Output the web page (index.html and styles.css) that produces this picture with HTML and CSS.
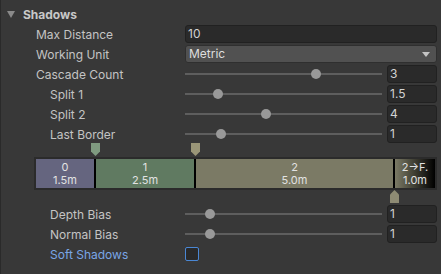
FILE: index.html
```html
<!DOCTYPE html>
<html lang="en">
<head>
    <meta charset="UTF-8">
    <title>Shadows</title>
    <link rel="stylesheet" href="styles.css">
</head>
<body>
<div class="panel">
    <div class="foldout">
        <span class="arrow"></span>
        <span class="foldout-title">Shadows</span>
    </div>

    <div class="row">
        <div class="label">Max Distance</div>
        <div class="control"><div class="field wide">10</div></div>
    </div>
    <div class="row">
        <div class="label">Working Unit</div>
        <div class="control">
            <div class="dropdown">Metric<span class="caret"></span></div>
        </div>
    </div>
    <div class="row">
        <div class="label">Cascade Count</div>
        <div class="control">
            <div class="slider"><div class="track"></div><div class="knob" style="left: 66.5%"></div></div>
            <div class="field num">3</div>
        </div>
    </div>
    <div class="row">
        <div class="label sub">Split 1</div>
        <div class="control">
            <div class="slider"><div class="track"></div><div class="knob" style="left: 17%"></div></div>
            <div class="field num">1.5</div>
        </div>
    </div>
    <div class="row">
        <div class="label sub">Split 2</div>
        <div class="control">
            <div class="slider"><div class="track"></div><div class="knob" style="left: 41%"></div></div>
            <div class="field num">4</div>
        </div>
    </div>
    <div class="row">
        <div class="label sub">Last Border</div>
        <div class="control">
            <div class="slider"><div class="track"></div><div class="knob" style="left: 18.5%"></div></div>
            <div class="field num">1</div>
        </div>
    </div>

    <!-- cascade splits -->
    <div class="cascades">
        <div class="pins">
            <span class="pin down green" style="left: 61px"></span>
            <span class="pin down olive" style="left: 161px"></span>
        </div>
        <div class="bar">
            <div class="seg seg0"><span>0</span><span>1.5m</span></div>
            <div class="seg seg1"><span>1</span><span>2.5m</span></div>
            <div class="seg seg2"><span>2</span><span>5.0m</span></div>
            <div class="seg seg3"><span>2&rarr;F.</span><span>1.0m</span></div>
        </div>
        <div class="pins">
            <span class="pin up fade" style="left: 360px"></span>
        </div>
    </div>

    <div class="row">
        <div class="label sub">Depth Bias</div>
        <div class="control">
            <div class="slider"><div class="track"></div><div class="knob" style="left: 12.5%"></div></div>
            <div class="field num">1</div>
        </div>
    </div>
    <div class="row">
        <div class="label sub">Normal Bias</div>
        <div class="control">
            <div class="slider"><div class="track"></div><div class="knob" style="left: 12.5%"></div></div>
            <div class="field num">1</div>
        </div>
    </div>
    <div class="row">
        <div class="label sub link">Soft Shadows</div>
        <div class="control"><div class="checkbox"></div></div>
    </div>
</div>
</body>
</html>
```

FILE: styles.css
```css
body {
    margin: 0;
    background-color: #383838;
    color: #c4c4c4;
    font-family: Inter, "Noto Sans", sans-serif;
    font-size: 12px;
}

.panel {
    height: 274px;
    border-left: 1px solid #2a2a2a;
    padding: 4px 4px 0 0;
    box-sizing: border-box;
}

.foldout {
    display: flex;
    align-items: center;
    height: 20px;
    padding-left: 6px;
}

.arrow {
    width: 0;
    height: 0;
    border-left: 4px solid transparent;
    border-right: 4px solid transparent;
    border-top: 7px solid #8a8a8a;
    margin-right: 8px;
}

.foldout-title {
    font-weight: 700;
    color: #c8c8c8;
}

.row {
    display: flex;
    align-items: center;
    height: 20px;
}

.label {
    width: 184px;
    flex-shrink: 0;
    padding-left: 35px;
    box-sizing: border-box;
    white-space: nowrap;
}

.label.sub {
    padding-left: 49px;
}

.label.link {
    color: #7aa6e6;
}

.control {
    flex: 1;
    display: flex;
    align-items: center;
}

.field {
    height: 18px;
    box-sizing: border-box;
    background: #2a2a2a;
    border: 1px solid #212121;
    border-radius: 3px;
    padding-left: 2px;
    line-height: 16px;
    color: #d2d2d2;
}

.field.wide {
    flex: 1;
}

.field.num {
    width: 50px;
    margin-left: 5px;
}

.dropdown {
    flex: 1;
    position: relative;
    height: 18px;
    box-sizing: border-box;
    background: #515151;
    border: 1px solid #2f2f2f;
    border-radius: 3px;
    padding-left: 3px;
    line-height: 16px;
    color: #dedede;
}

.caret {
    position: absolute;
    right: 6px;
    top: 6px;
    border-left: 4px solid transparent;
    border-right: 4px solid transparent;
    border-top: 5px solid #c4c4c4;
}

.slider {
    flex: 1;
    position: relative;
    height: 18px;
}

.track {
    position: absolute;
    left: 0;
    right: 0;
    top: 8px;
    height: 2px;
    background: #5e5e5e;
}

.knob {
    position: absolute;
    top: 4px;
    width: 10px;
    height: 10px;
    margin-left: -5px;
    border-radius: 50%;
    background: #999;
}

.cascades {
    padding-left: 33px;
    margin-top: -1px;
}

.pins {
    position: relative;
    height: 14px;
}

.pin {
    position: absolute;
    top: 0;
    width: 9px;
    height: 13px;
    margin-left: -4px;
}

.pin.down {
    clip-path: polygon(0 0, 100% 0, 100% 65%, 50% 100%, 0 65%);
}

.pin.up {
    clip-path: polygon(50% 0, 100% 35%, 100% 100%, 0 100%, 0 35%);
}

.pin.green {
    background: #7f9b80;
}

.pin.olive {
    background: #9a9678;
}

.pin.fade {
    background: #8e8b74;
}

.bar {
    display: flex;
    height: 33px;
    background: #000;
    border: 2px solid #2b2b2b;
    box-sizing: border-box;
}

.seg {
    display: flex;
    flex-direction: column;
    align-items: center;
    justify-content: center;
    font-size: 11px;
    line-height: 13px;
    color: #e2e2e2;
}

.seg + .seg {
    margin-left: 2px;
}

.seg0 {
    width: 58px;
    background: #65657f;
}

.seg1 {
    width: 98px;
    background: #607a61;
}

.seg2 {
    width: 197px;
    background: #7b7a65;
}

.seg3 {
    flex: 1;
    background: linear-gradient(to right, #7b7a65, #000);
}

.checkbox {
    width: 14px;
    height: 14px;
    box-sizing: border-box;
    border: 1px solid #4a87d4;
    border-radius: 2px;
    background: #2a2a2a;
}
```
